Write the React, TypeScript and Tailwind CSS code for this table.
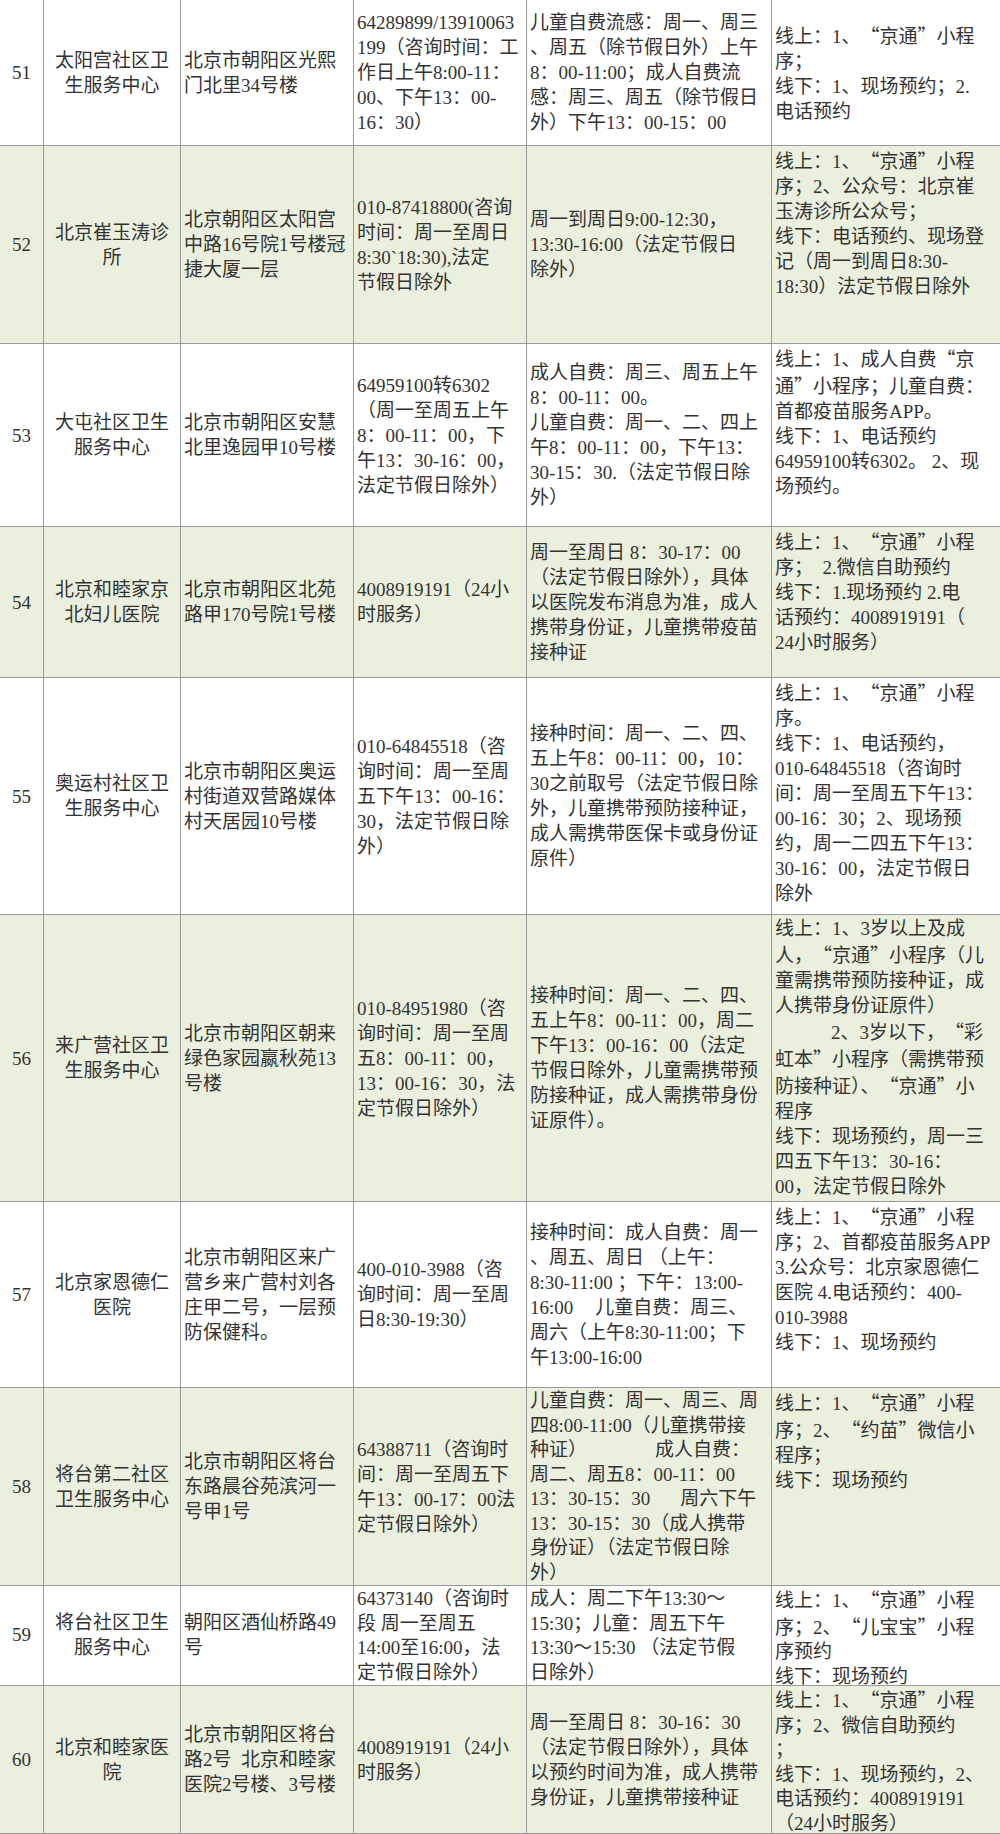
import React from "react";

type Line = string | React.ReactElement;

type Row = {
  h: string;
  green: boolean;
  num: string;
  name: Line[];
  addr: Line[];
  phone: Line[];
  time: Line[];
  book: Line[];
  phoneTop?: boolean;
  timeTop?: boolean;
  bookTop?: boolean;
  timeTight?: boolean;
  bookTight?: boolean;
  allTight?: boolean;
};

function Q({ s }: { s: string }) {
  const parts = s.split(/([“”])/);
  return (
    <>
      {parts.map((p, i) =>
        p === "“" ? (
          <span key={i} className="inline-block w-[19px] text-right font-['Noto_Sans_CJK_SC']">
            {p}
          </span>
        ) : p === "”" ? (
          <span key={i} className="inline-block w-[19px] text-left font-['Noto_Sans_CJK_SC']">
            {p}
          </span>
        ) : (
          <React.Fragment key={i}>{p}</React.Fragment>
        )
      )}
    </>
  );
}

const rows: Row[] = [
  {
    h: "h-[146px]",
    green: false,
    num: "51",
    name: ["太阳宫社区卫", "生服务中心"],
    addr: ["北京市朝阳区光熙", "门北里34号楼"],
    phone: ["64289899/13910063", "199（咨询时间：工", "作日上午8:00-11：", "00、下午13：00-", "16：30）"],
    time: ["儿童自费流感：周一、周三", "、周五（除节假日外）上午", "8：00-11:00；成人自费流", "感：周三、周五（除节假日", "外）下午13：00-15：00"],
    book: ["线上：1、“京通”小程", "序；", "线下：1、现场预约；2.", "电话预约"],
  },
  {
    h: "h-[198px]",
    green: true,
    num: "52",
    name: ["北京崔玉涛诊", "所"],
    addr: ["北京朝阳区太阳宫", "中路16号院1号楼冠", "捷大厦一层"],
    phone: ["010-87418800(咨询", "时间：周一至周日", "8:30`18:30),法定", "节假日除外"],
    time: ["周一到周日9:00-12:30，", "13:30-16:00（法定节假日", "除外）"],
    book: ["线上：1、“京通”小程", "序；2、公众号：北京崔", "玉涛诊所公众号；", "线下：电话预约、现场登", "记（周一到周日8:30-", "18:30）法定节假日除外"],
    bookTop: true,
  },
  {
    h: "h-[183px]",
    green: false,
    num: "53",
    name: ["大屯社区卫生", "服务中心"],
    addr: ["北京市朝阳区安慧", "北里逸园甲10号楼"],
    phone: ["64959100转6302", "（周一至周五上午", "8：00-11：00，下", "午13：30-16：00，", "法定节假日除外）"],
    time: ["成人自费：周三、周五上午", "8：00-11：00。", "儿童自费：周一、二、四上", "午8：00-11：00，下午13：", "30-15：30.（法定节假日除", "外）"],
    book: ["线上：1、成人自费“京", "通”小程序；儿童自费：", "首都疫苗服务APP。", "线下：1、电话预约", "64959100转6302。 2、现", "场预约。"],
    bookTop: true,
  },
  {
    h: "h-[151px]",
    green: true,
    num: "54",
    name: ["北京和睦家京", "北妇儿医院"],
    addr: ["北京市朝阳区北苑", "路甲170号院1号楼"],
    phone: ["4008919191（24小", "时服务）"],
    time: ["周一至周日 8：30-17：00", "（法定节假日除外），具体", "以医院发布消息为准，成人", "携带身份证，儿童携带疫苗", "接种证"],
    book: ["线上：1、“京通”小程", "序；  2.微信自助预约", "线下：1.现场预约 2.电", "话预约：4008919191（", "24小时服务）"],
    bookTop: true,
  },
  {
    h: "h-[237px]",
    green: false,
    num: "55",
    name: ["奥运村社区卫", "生服务中心"],
    addr: ["北京市朝阳区奥运", "村街道双营路媒体", "村天居园10号楼"],
    phone: ["010-64845518（咨", "询时间：周一至周", "五下午13：00-16：", "30，法定节假日除", "外）"],
    time: ["接种时间：周一、二、四、", "五上午8：00-11：00，10：", "30之前取号（法定节假日除", "外，儿童携带预防接种证，", "成人需携带医保卡或身份证", "原件）"],
    book: ["线上：1、“京通”小程", "序。", "线下：1、电话预约，", "010-64845518（咨询时", "间：周一至周五下午13：", "00-16：30；2、现场预", "约，周一二四五下午13：", "30-16：00，法定节假日", "除外"],
    bookTop: true,
  },
  {
    h: "h-[287px]",
    green: true,
    num: "56",
    name: ["来广营社区卫", "生服务中心"],
    addr: ["北京市朝阳区朝来", "绿色家园嬴秋苑13", "号楼"],
    phone: ["010-84951980（咨", "询时间：周一至周", "五8：00-11：00，", "13：00-16：30，法", "定节假日除外）"],
    time: ["接种时间：周一、二、四、", "五上午8：00-11：00，周二", "下午13：00-16：00（法定", "节假日除外，儿童需携带预", "防接种证，成人需携带身份", "证原件）。"],
    book: [
      "线上：1、3岁以上及成",
      "人，“京通”小程序（儿",
      "童需携带预防接种证，成",
      "人携带身份证原件）",
      <span className="pl-[56px]">
        <Q s="2、3岁以下，“彩" />
      </span>,
      "虹本”小程序（需携带预",
      "防接种证）、“京通”小",
      "程序",
      "线下：现场预约，周一三",
      "四五下午13：30-16：",
      "00，法定节假日除外",
    ],
    bookTop: true,
  },
  {
    h: "h-[186px]",
    green: false,
    num: "57",
    name: ["北京家恩德仁", "医院"],
    addr: ["北京市朝阳区来广", "营乡来广营村刘各", "庄甲二号，一层预", "防保健科。"],
    phone: ["400-010-3988（咨", "询时间：周一至周", "日8:30-19:30）"],
    time: [
      "接种时间：成人自费：周一",
      "、周五、周日 （上午：",
      "8:30-11:00 ；下午：13:00-",
      <>
        16:00<span className="inline-block w-[22px]" />儿童自费：周三、
      </>,
      "周六（上午8:30-11:00；下",
      "午13:00-16:00",
    ],
    book: ["线上：1、“京通”小程", "序；2、首都疫苗服务APP", "3.公众号：北京家恩德仁", "医院 4.电话预约：400-", "010-3988", "线下：1、现场预约"],
    bookTop: true,
  },
  {
    h: "h-[198px]",
    green: true,
    num: "58",
    name: ["将台第二社区", "卫生服务中心"],
    addr: ["北京市朝阳区将台", "东路晨谷苑滨河一", "号甲1号"],
    phone: ["64388711（咨询时", "间：周一至周五下", "午13：00-17：00法", "定节假日除外）"],
    time: [
      "儿童自费：周一、周三、周",
      "四8:00-11:00（儿童携带接",
      <>
        种证）<span className="inline-block w-[68px]" />成人自费：
      </>,
      "周二、周五8：00-11：00",
      <>
        13：30-15：30<span className="inline-block w-[30px]" />周六下午
      </>,
      "13：30-15：30（成人携带",
      "身份证）（法定节假日除",
      "外）",
    ],
    book: ["线上：1、“京通”小程", "序；2、“约苗”微信小", "程序；", "线下：现场预约"],
    timeTop: true,
    bookTop: true,
    timeTight: true,
  },
  {
    h: "h-[100px]",
    green: false,
    num: "59",
    name: ["将台社区卫生", "服务中心"],
    addr: ["朝阳区酒仙桥路49", "号"],
    phone: ["64373140（咨询时", "段 周一至周五", "14:00至16:00，法", "定节假日除外）"],
    time: ["成人：周二下午13:30～", "15:30；儿童：周五下午", "13:30～15:30 （法定节假", "日除外）"],
    book: ["线上：1、“京通”小程", "序；2、“儿宝宝”小程", "序预约", "线下：现场预约"],
    phoneTop: true,
    timeTop: true,
    bookTop: true,
    allTight: true,
  },
  {
    h: "h-[148px]",
    green: true,
    num: "60",
    name: ["北京和睦家医", "院"],
    addr: ["北京市朝阳区将台", "路2号  北京和睦家", "医院2号楼、3号楼"],
    phone: ["4008919191（24小", "时服务）"],
    time: ["周一至周日 8：30-16：30", "（法定节假日除外），具体", "以预约时间为准，成人携带", "身份证，儿童携带接种证"],
    book: ["线上：1、“京通”小程", "序；2、微信自助预约", "；", "线下：1、现场预约，2、", "电话预约：4008919191", "（24小时服务）"],
    bookTop: true,
    bookTight: true,
  },
];

function Cell({
  w,
  lines,
  top,
  center,
  last,
  tight,
}: {
  w: string;
  lines: Line[];
  top?: boolean;
  center?: boolean;
  last?: boolean;
  tight?: boolean;
}) {
  return (
    <div
      className={`${w} shrink-0 h-full overflow-hidden flex flex-col ${
        top ? "justify-start pt-[1px]" : "justify-center"
      } ${center ? "items-center" : "pl-[3px]"} ${last ? "" : "border-r border-[#9a9a9a]"} ${
        tight ? "leading-[24.5px]" : "leading-[25px]"
      }`}
    >
      {lines.map((l, i) => (
        <div key={i} className={`whitespace-pre ${center ? "text-center" : ""}`}>
          {typeof l === "string" ? <Q s={l} /> : l}
        </div>
      ))}
    </div>
  );
}

export default function App() {
  return (
    <div
      lang="zh-CN"
      className="w-[1000px] h-[1834px] overflow-hidden bg-white text-[#333] text-[19px] leading-[25px] font-['Liberation_Serif','Noto_Sans_CJK_SC',serif]"
    >
      {rows.map((r) => (
        <div
          key={r.num}
          className={`${r.h} flex border-b border-[#9a9a9a] ${r.green ? "bg-[#ebf0de]" : "bg-white"}`}
        >
          <Cell w="w-[44px]" lines={[r.num]} center tight={r.allTight} />
          <Cell w="w-[137px]" lines={r.name} center tight={r.allTight} />
          <Cell w="w-[173px]" lines={r.addr} tight={r.allTight} />
          <Cell w="w-[173px]" lines={r.phone} top={r.phoneTop} tight={r.allTight} />
          <Cell w="w-[245px]" lines={r.time} top={r.timeTop} tight={r.allTight || r.timeTight} />
          <Cell w="w-[228px]" lines={r.book} top={r.bookTop} last tight={r.allTight || r.bookTight} />
        </div>
      ))}
    </div>
  );
}
